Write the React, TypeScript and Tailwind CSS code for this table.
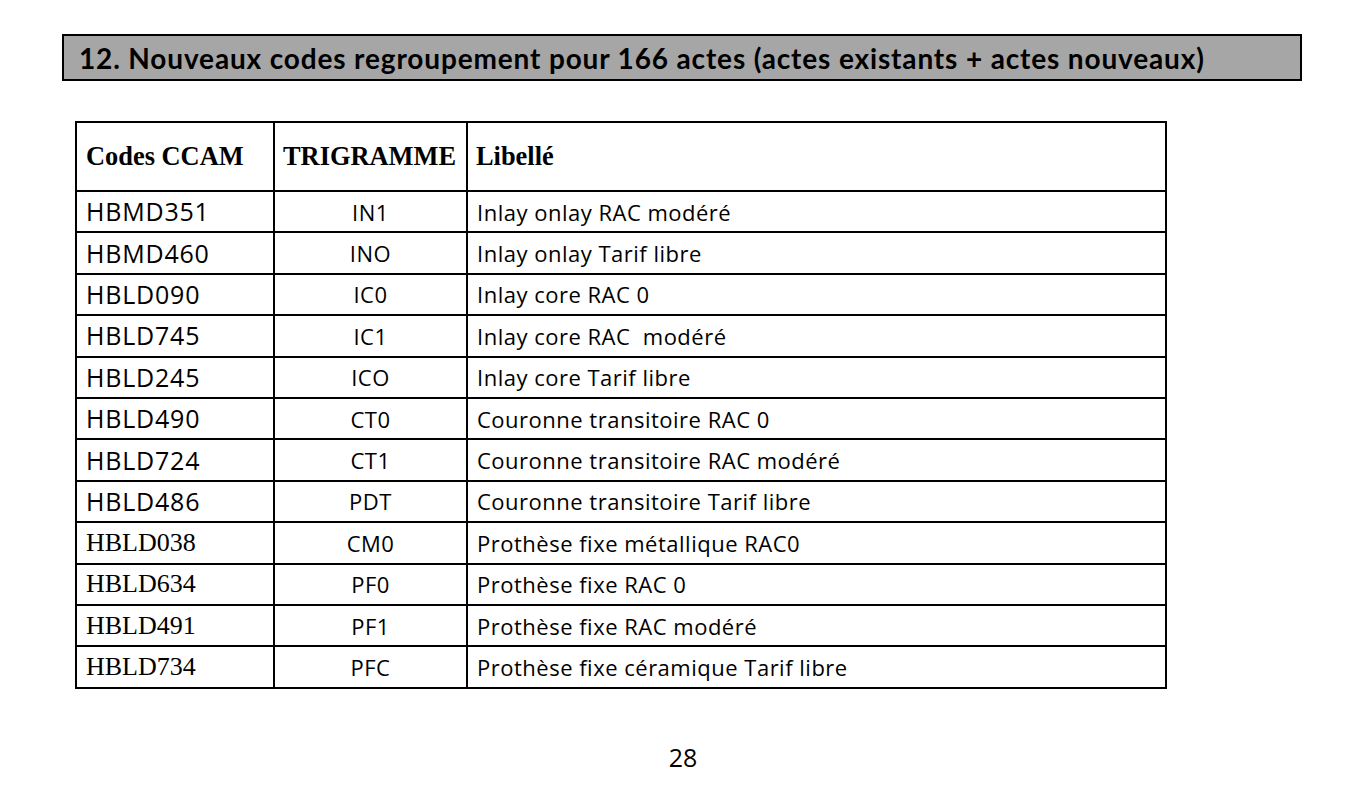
import React from 'react';

type Row = { code: string; tri: string; label: string; serif?: boolean };

const rows: Row[] = [
  { code: 'HBMD351', tri: 'IN1', label: 'Inlay onlay RAC modéré' },
  { code: 'HBMD460', tri: 'INO', label: 'Inlay onlay Tarif libre' },
  { code: 'HBLD090', tri: 'IC0', label: 'Inlay core RAC 0' },
  { code: 'HBLD745', tri: 'IC1', label: 'Inlay core RAC\u00a0 modéré' },
  { code: 'HBLD245', tri: 'ICO', label: 'Inlay core Tarif libre' },
  { code: 'HBLD490', tri: 'CT0', label: 'Couronne transitoire RAC 0' },
  { code: 'HBLD724', tri: 'CT1', label: 'Couronne transitoire RAC modéré' },
  { code: 'HBLD486', tri: 'PDT', label: 'Couronne transitoire Tarif libre' },
  { code: 'HBLD038', tri: 'CM0', label: 'Prothèse fixe métallique RAC0', serif: true },
  { code: 'HBLD634', tri: 'PF0', label: 'Prothèse fixe RAC 0', serif: true },
  { code: 'HBLD491', tri: 'PF1', label: 'Prothèse fixe RAC modéré', serif: true },
  { code: 'HBLD734', tri: 'PFC', label: 'Prothèse fixe céramique Tarif libre', serif: true },
];

const lato = "font-['Lato','Open_Sans',sans-serif]";
const sans = "font-['Open_Sans','Lato',sans-serif]";
const serif = "font-['Liberation_Serif','Times_New_Roman',serif]";

export default function App() {
  return (
    <div className="w-[1366px] h-[786px] bg-white text-black flex flex-col">
      {/* section title */}
      <div className="mt-[34px] ml-[62px] w-[1240px] h-[47px] bg-[#a6a6a6] border-2 border-black flex items-center pl-[15px]">
        <h1 className={`${lato} font-bold text-[28px] leading-none tracking-[0.85px]`}>
          12. Nouveaux codes regroupement pour 166 actes (actes existants + actes nouveaux)
        </h1>
      </div>

      {/* table */}
      <table className="mt-[40px] ml-[75px] w-[1092px] border-collapse border-2 border-black">
        <thead>
          <tr className="h-[69px]">
            <th className={`${serif} w-[198px] border-2 border-black text-left pl-[9px] font-bold text-[26.4px]`}>Codes CCAM</th>
            <th className={`${serif} w-[193px] border-2 border-black text-left pl-[8px] font-bold text-[26.4px]`}>TRIGRAMME</th>
            <th className={`${serif} border-2 border-black text-left pl-[8px] font-bold text-[26.4px]`}>Libellé</th>
          </tr>
        </thead>
        <tbody>
          {rows.map((r) => (
            <tr key={r.code} className="h-[41.4px]">
              <td
                className={`border-2 border-black pl-[9px] leading-none ${
                  r.serif ? `${serif} text-[26px]` : `${sans} text-[25px] tracking-[0.8px]`
                }`}
              >
                {r.code}
              </td>
              <td className={`${sans} border-2 border-black text-center text-[22px] tracking-[0.5px] leading-none`}>{r.tri}</td>
              <td className={`${sans} border-2 border-black pl-[9px] text-[22px] tracking-[0.5px] leading-none whitespace-pre`}>
                {r.label}
              </td>
            </tr>
          ))}
        </tbody>
      </table>

      <div className={`${sans} mt-[56px] text-center text-[25px] leading-none`}>28</div>
    </div>
  );
}
